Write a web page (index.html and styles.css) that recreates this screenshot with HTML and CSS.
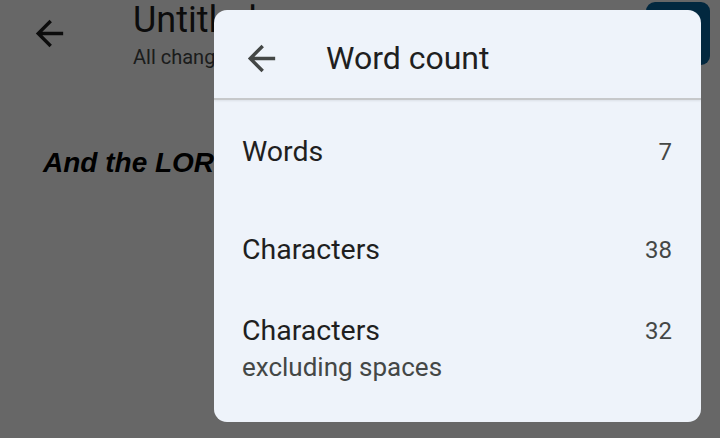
FILE: index.html
```html
<!DOCTYPE html>
<html>
<head>
<meta charset="utf-8">
<link rel="stylesheet" href="styles.css">
</head>
<body>
<div class="page">
  <header class="topbar">
    <svg class="icon back" viewBox="0 0 24 24"><path d="M20 11H7.83l5.59-5.59L12 4l-8 8 8 8 1.41-1.41L7.83 13H20v-2z"/></svg>
    <div class="doc-title">
      <div class="title">Untitled</div>
      <div class="saved">All changes</div>
    </div>
    <div class="spacer"></div>
    <div class="action-btn"></div>
  </header>
  <main class="doc">
    <p class="verse">And the LORD</p>
  </main>
</div>
<div class="scrim"></div>
<section class="dialog">
  <div class="dlg-head">
    <svg class="icon dlg-back" viewBox="0 0 24 24"><path d="M20 11H7.83l5.59-5.59L12 4l-8 8 8 8 1.41-1.41L7.83 13H20v-2z"/></svg>
    <h1 class="dlg-title">Word count</h1>
  </div>
  <div class="dlg-body">
    <div class="row">
      <div class="line"><span class="label">Words</span><span class="num">7</span></div>
    </div>
    <div class="row">
      <div class="line"><span class="label">Characters</span><span class="num">38</span></div>
    </div>
    <div class="row">
      <div class="line"><span class="label">Characters</span><span class="num">32</span></div>
      <div class="sub">excluding spaces</div>
    </div>
  </div>
</section>
</body>
</html>
```

FILE: styles.css
```css
* { box-sizing: border-box; }
html, body { margin: 0; padding: 0; }
body {
  width: 720px;
  height: 438px;
  overflow: hidden;
  background: #ffffff;
  font-family: Roboto, "Noto Sans", sans-serif;
  position: relative;
}
.page { width: 720px; height: 438px; }
.topbar {
  display: flex;
  align-items: flex-start;
  height: 110px;
  padding: 0 10px 0 29px;
}
.icon { fill: #1f1f1f; flex: none; }
.back { width: 41px; height: 41px; margin-top: 13px; }
.doc-title { margin-left: 63px; color: #1f1f1f; }
.title { font-size: 36px; line-height: 40px; white-space: nowrap; }
.saved { font-size: 20px; line-height: 24px; color: #444746; margin-top: 5px; white-space: nowrap; }
.spacer { flex: 1; }
.action-btn {
  width: 64px; height: 63px; margin-top: 2px;
  background: #07639c;
  border-radius: 9px;
}
.doc { padding: 0 0 0 43px; }
.verse {
  margin: 37px 0 0 0;
  font-family: "Liberation Sans", Arial, sans-serif;
  font-weight: bold;
  font-style: italic;
  font-size: 28px;
  line-height: 32px;
  color: #000;
  white-space: nowrap;
}
.scrim {
  position: absolute; inset: 0;
  background: rgba(0, 0, 0, 0.595);
}
.dialog {
  position: absolute;
  left: 214px; top: 10px;
  width: 487px; height: 412px;
  background: #eef3fa;
  border-radius: 13px;
  overflow: hidden;
  color: #1f1f1f;
}
.dlg-head {
  height: 90px;
  display: flex;
  align-items: center;
  padding: 8px 0 0 27px;
  border-bottom: 2px solid #c6c8ca;
  box-shadow: 0 1px 2px rgba(0,0,0,0.08);
}
.dlg-back { width: 41px; height: 41px; fill: #444746; }
.dlg-title {
  margin: 0 0 0 44px;
  font-weight: normal;
  font-size: 32px;
  line-height: 40px;
  color: #1f1f1f;
}
.dlg-body { padding: 3px 29px 0 28px; }
.row {
  height: 98px;
  display: flex;
  flex-direction: column;
  justify-content: center;
}
.line { display: flex; justify-content: space-between; align-items: center; }
.label { font-size: 28.5px; line-height: 34px; color: #1f1f1f; }
.num { font-size: 24px; line-height: 34px; color: #444746; }
.sub { font-size: 26px; line-height: 30px; color: #444746; margin-top: 4px; }
```
